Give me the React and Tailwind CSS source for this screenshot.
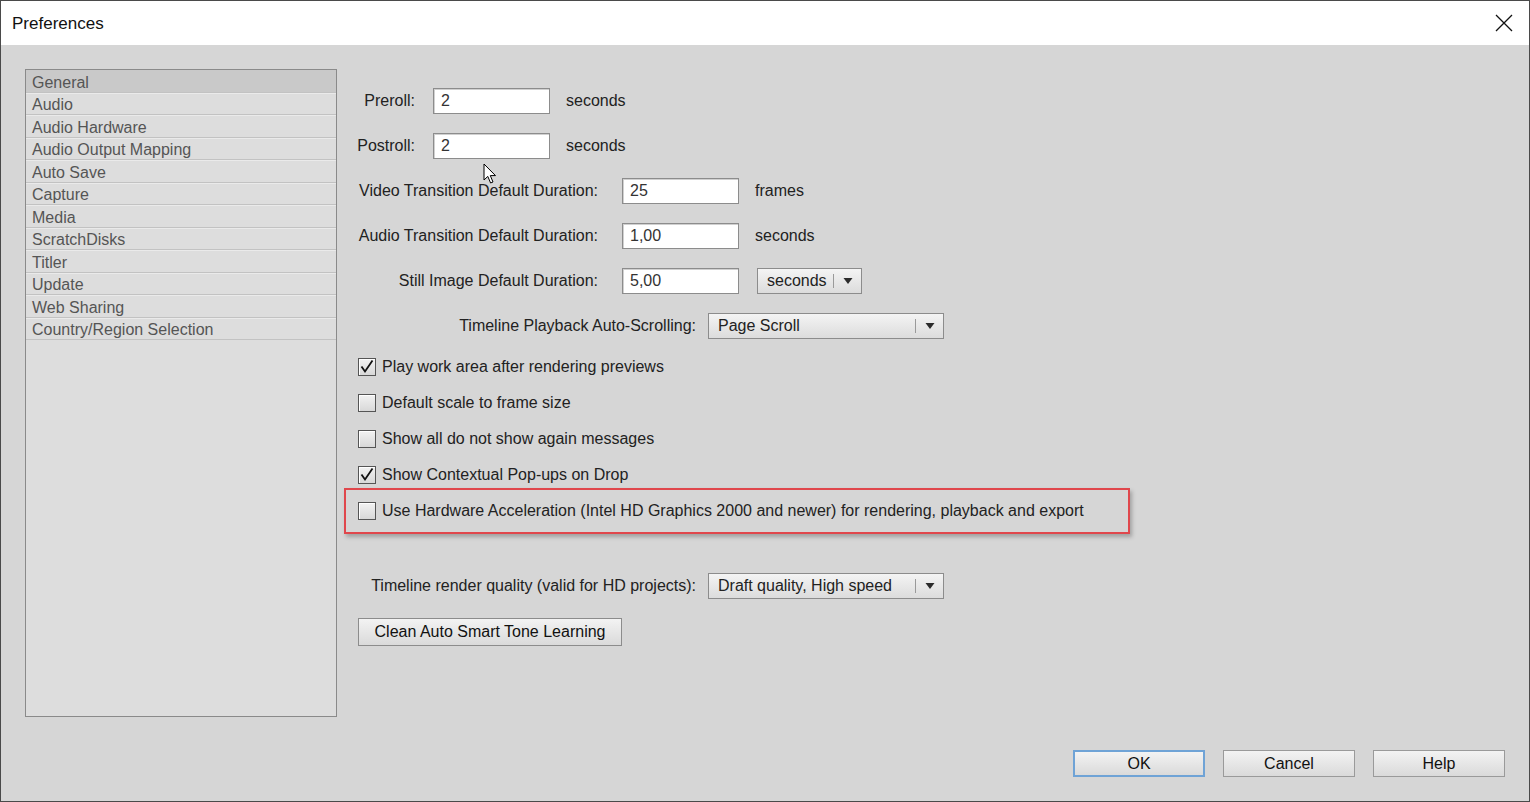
import React from "react";

const FONT = { fontFamily: '"Liberation Sans", Arial, sans-serif' };

function TextInput({ value }) {
  return (
    <div className="w-[117px] h-[26px] bg-white border border-[#8c8c8c] shadow-[inset_1px_1px_0_#d0d0d0] flex items-center pl-[7px] text-[16px] text-[#333]">
      {value}
    </div>
  );
}

function Arrow() {
  return (
    <svg width="10" height="8" viewBox="0 0 10 8">
      <path d="M0.5 1 L9.5 1 L5 7 Z" fill="#2b2b2b" />
    </svg>
  );
}

function Dropdown({ label, width }) {
  return (
    <div
      className={`${width} h-[26px] border border-[#8c8c8c] bg-gradient-to-b from-[#f4f4f4] to-[#dcdcdc] flex items-center text-[16px] text-[#222]`}
    >
      <span className="pl-[9px] flex-1">{label}</span>
      <span className="w-px h-[14px] bg-[#9a9a9a]" />
      <span className="w-[27px] flex items-center justify-center">
        <Arrow />
      </span>
    </div>
  );
}

function Checkbox({ checked }) {
  return (
    <div className="w-[18px] h-[18px] border border-[#555] bg-gradient-to-b from-[#f2f2f2] to-[#d8d8d8] shadow-[inset_1px_1px_0_#fff] flex items-center justify-center">
      {checked && (
        <svg width="16" height="16" viewBox="0 0 16 16">
          <path d="M2.5 7.5 L6 12.5 L13.5 1.5" fill="none" stroke="#111" strokeWidth="1.8" />
        </svg>
      )}
    </div>
  );
}

function CheckRow({ checked, children }) {
  return (
    <div className="h-[18px] flex items-center gap-[6px] text-[16px] text-[#222]">
      <Checkbox checked={checked} />
      <span>{children}</span>
    </div>
  );
}

function Button({ children, focused }) {
  return (
    <div
      className={`w-[132px] h-[27px] flex items-center justify-center text-[16px] text-[#111] bg-gradient-to-b from-[#f3f3f3] to-[#dadada] ${
        focused ? "border-2 border-[#6fa3d6]" : "border border-[#9a9a9a]"
      }`}
    >
      {children}
    </div>
  );
}

const items = [
  "General",
  "Audio",
  "Audio Hardware",
  "Audio Output Mapping",
  "Auto Save",
  "Capture",
  "Media",
  "ScratchDisks",
  "Titler",
  "Update",
  "Web Sharing",
  "Country/Region Selection",
];

export default function App() {
  return (
    <div
      style={FONT}
      className="relative w-[1530px] h-[802px] border border-[#4a4a4a] bg-[#d6d6d6] flex flex-col overflow-hidden"
    >
      {/* title bar */}
      <div className="h-[44px] bg-white flex items-center justify-between pl-[11px] pr-[16px]">
        <span className="text-[17px] text-[#111] pt-[2px]">Preferences</span>
        <svg width="18" height="18" viewBox="0 0 18 18">
          <path d="M1 1 L17 17 M17 1 L1 17" stroke="#111" strokeWidth="1.3" />
        </svg>
      </div>

      {/* body */}
      <div className="flex-1 flex pt-[24px] pl-[24px]">
        {/* sidebar list */}
        <div className="w-[312px] h-[648px] border border-[#8a8a8a] bg-[#dddddd] shrink-0">
          {items.map((it, i) => (
            <div
              key={it}
              className={`h-[22.5px] border-b border-[#c2c2c2] pl-[6px] pt-[4px] flex items-center text-[16px] text-[#555] ${
                i === 0 ? "bg-[#c9c9c9]" : "shadow-[inset_0_1px_0_#eaeaea]"
              }`}
            >
              {it}
            </div>
          ))}
        </div>

        {/* right panel */}
        <div className="flex-1 flex flex-col pl-[19px] pt-[19px] text-[16px] text-[#222]">
          <div className="flex flex-col gap-[19px]">
            <div className="flex items-center">
              <span className="w-[59px] text-right">Preroll:</span>
              <span className="ml-[18px]"><TextInput value="2" /></span>
              <span className="ml-[16px]">seconds</span>
            </div>
            <div className="flex items-center">
              <span className="w-[59px] text-right">Postroll:</span>
              <span className="ml-[18px]"><TextInput value="2" /></span>
              <span className="ml-[16px]">seconds</span>
            </div>
            <div className="flex items-center">
              <span className="w-[242px] text-right">Video Transition Default Duration:</span>
              <span className="ml-[24px]"><TextInput value="25" /></span>
              <span className="ml-[16px]">frames</span>
            </div>
            <div className="flex items-center">
              <span className="w-[242px] text-right">Audio Transition Default Duration:</span>
              <span className="ml-[24px]"><TextInput value="1,00" /></span>
              <span className="ml-[16px]">seconds</span>
            </div>
            <div className="flex items-center">
              <span className="w-[242px] text-right">Still Image Default Duration:</span>
              <span className="ml-[24px]"><TextInput value="5,00" /></span>
              <span className="ml-[18px]"><Dropdown label="seconds" width="w-[105px]" /></span>
            </div>
            <div className="flex items-center">
              <span className="w-[340px] text-right">Timeline Playback Auto-Scrolling:</span>
              <span className="ml-[12px]"><Dropdown label="Page Scroll" width="w-[236px]" /></span>
            </div>
          </div>

          <div className="flex flex-col gap-[18px] mt-[19px] pl-[2px]">
            <CheckRow checked>Play work area after rendering previews</CheckRow>
            <CheckRow>Default scale to frame size</CheckRow>
            <CheckRow>Show all do not show again messages</CheckRow>
            <CheckRow checked>Show Contextual Pop-ups on Drop</CheckRow>
          </div>

          <div className="mt-[4px] ml-[-12px] w-[786px] h-[46px] border-2 border-[#e0474c] shadow-[2px_3px_4px_rgba(0,0,0,0.25)] flex items-center pl-[12px]">
            <CheckRow>
              Use Hardware Acceleration (Intel HD Graphics 2000 and newer) for rendering, playback and export
            </CheckRow>
          </div>

          <div className="flex items-center mt-[39px]">
            <span className="w-[340px] text-right">Timeline render quality (valid for HD projects):</span>
            <span className="ml-[12px]"><Dropdown label="Draft quality, High speed" width="w-[236px]" /></span>
          </div>

          <div className="mt-[19px] ml-[2px] w-[264px] h-[28px] border border-[#8c8c8c] bg-gradient-to-b from-[#f3f3f3] to-[#dadada] flex items-center justify-center text-[#111]">
            Clean Auto Smart Tone Learning
          </div>

          <div className="flex-1" />
          <div className="flex justify-end gap-[18px] pr-[24px] pb-[24px]">
            <Button focused>OK</Button>
            <Button>Cancel</Button>
            <Button>Help</Button>
          </div>
        </div>
      </div>

      {/* mouse cursor */}
      <svg
        className="absolute left-[482px] top-[162px]"
        width="14"
        height="22"
        viewBox="0 0 14 22"
      >
        <path
          d="M1 1 L1 17 L4.8 13.4 L7.6 20 L10 19 L7.3 12.6 L12.5 12.6 Z"
          fill="#fff"
          stroke="#000"
          strokeWidth="1"
          strokeLinejoin="round"
        />
      </svg>
    </div>
  );
}
